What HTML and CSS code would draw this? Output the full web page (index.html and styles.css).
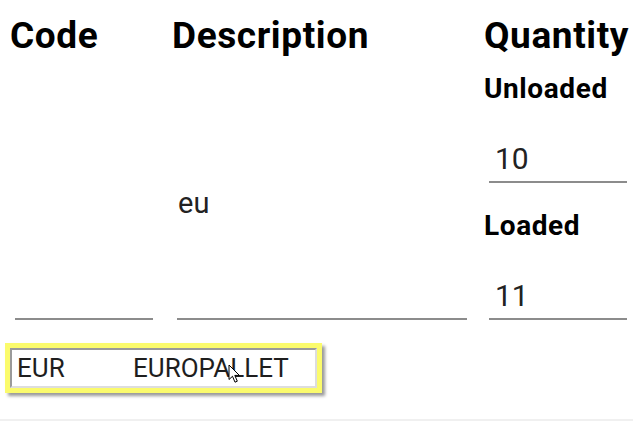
FILE: index.html
```html
<!DOCTYPE html>
<html>
<head>
<meta charset="utf-8">
<link rel="stylesheet" href="styles.css">
</head>
<body>
<div class="page">
  <div class="grid">
    <div class="th">Code</div>
    <div class="th">Description</div>
    <div class="th">Quantity</div>
    <div class="cell cell-code"><div class="input input-code"></div></div>
    <div class="cell cell-desc">
      <div class="desc-value">eu</div>
      <div class="input input-desc"></div>
    </div>
    <div class="cell cell-qty">
      <div class="sub sub-first">Unloaded</div>
      <div class="input input-qty">10</div>
      <div class="sub">Loaded</div>
      <div class="input input-qty">11</div>
    </div>
  </div>
  <div class="suggest-wrap">
    <div class="suggest">
      <div class="suggest-row">
        <span class="s-code">EUR</span><span class="s-desc">EUROPALLET</span>
      </div>
    </div>
    <svg class="cursor" width="13" height="20" viewBox="0 0 13 20">
      <path d="M1 1 L1 15.5 L4.5 12.3 L7 18.2 L9.3 17.2 L6.8 11.4 L11.4 11.4 Z" fill="#fff" stroke="#000" stroke-width="1" stroke-linejoin="round"/>
    </svg>
  </div>
  <div class="rule"></div>
</div>
</body>
</html>
```
FILE: styles.css
```css
html, body {
  margin: 0;
  padding: 0;
  background: #fff;
}
body {
  font-family: Roboto, "Liberation Sans", sans-serif;
  color: #222;
}
.page {
  width: 633px;
  height: 433px;
  overflow: hidden;
}
.grid {
  display: grid;
  grid-template-columns: 162px 312px 149px;
  padding: 15px 0 0 10px;
}
.th {
  font-size: 37px;
  font-weight: 700;
  line-height: 42px;
  letter-spacing: 0.6px;
  color: #000;
  white-space: nowrap;
}
.cell {
  display: flex;
  flex-direction: column;
}
.cell-code {
  justify-content: flex-end;
}
.input {
  border-bottom: 2px solid #8c8c8c;
  margin-left: 5px;
}
.input-code {
  width: 138px;
  height: 48px;
}
.cell-desc {
  justify-content: flex-end;
}
.desc-value {
  flex: 1;
  display: flex;
  align-items: center;
  padding: 78px 0 0 6px;
  font-size: 29px;
  line-height: 36px;
  color: #222;
}
.input-desc {
  width: 290px;
  height: 48px;
}
.sub {
  font-size: 28px;
  font-weight: 700;
  line-height: 30px;
  letter-spacing: 0.6px;
  color: #000;
  margin-top: 28px;
  white-space: nowrap;
}
.sub-first {
  margin-top: 17px;
}
.input-qty {
  width: 132px;
  margin-top: 29px;
  padding: 8px 0 4px 6px;
  font-size: 30px;
  line-height: 36px;
  color: #222;
}
.suggest-wrap {
  position: relative;
  margin: 23px 0 0 5px;
  width: 317px;
}
.suggest {
  border: 5px solid #fbfb6c;
  box-shadow: 3px 3px 3px rgba(0, 0, 0, 0.4);
  background: #fff;
}
.suggest-row {
  border: 2px solid #9a9a9a;
  border-right-color: #ddd;
  border-bottom-color: #ddd;
  padding: 3px 0 3px 5px;
  font-size: 26px;
  line-height: 30px;
  color: #1e1e1e;
  white-space: nowrap;
  display: flex;
}
.s-code {
  width: 116px;
}
.cursor {
  position: absolute;
  left: 223px;
  top: 21px;
}
.rule {
  margin-top: 26px;
  height: 2px;
  background: #f0f0f0;
}
```
